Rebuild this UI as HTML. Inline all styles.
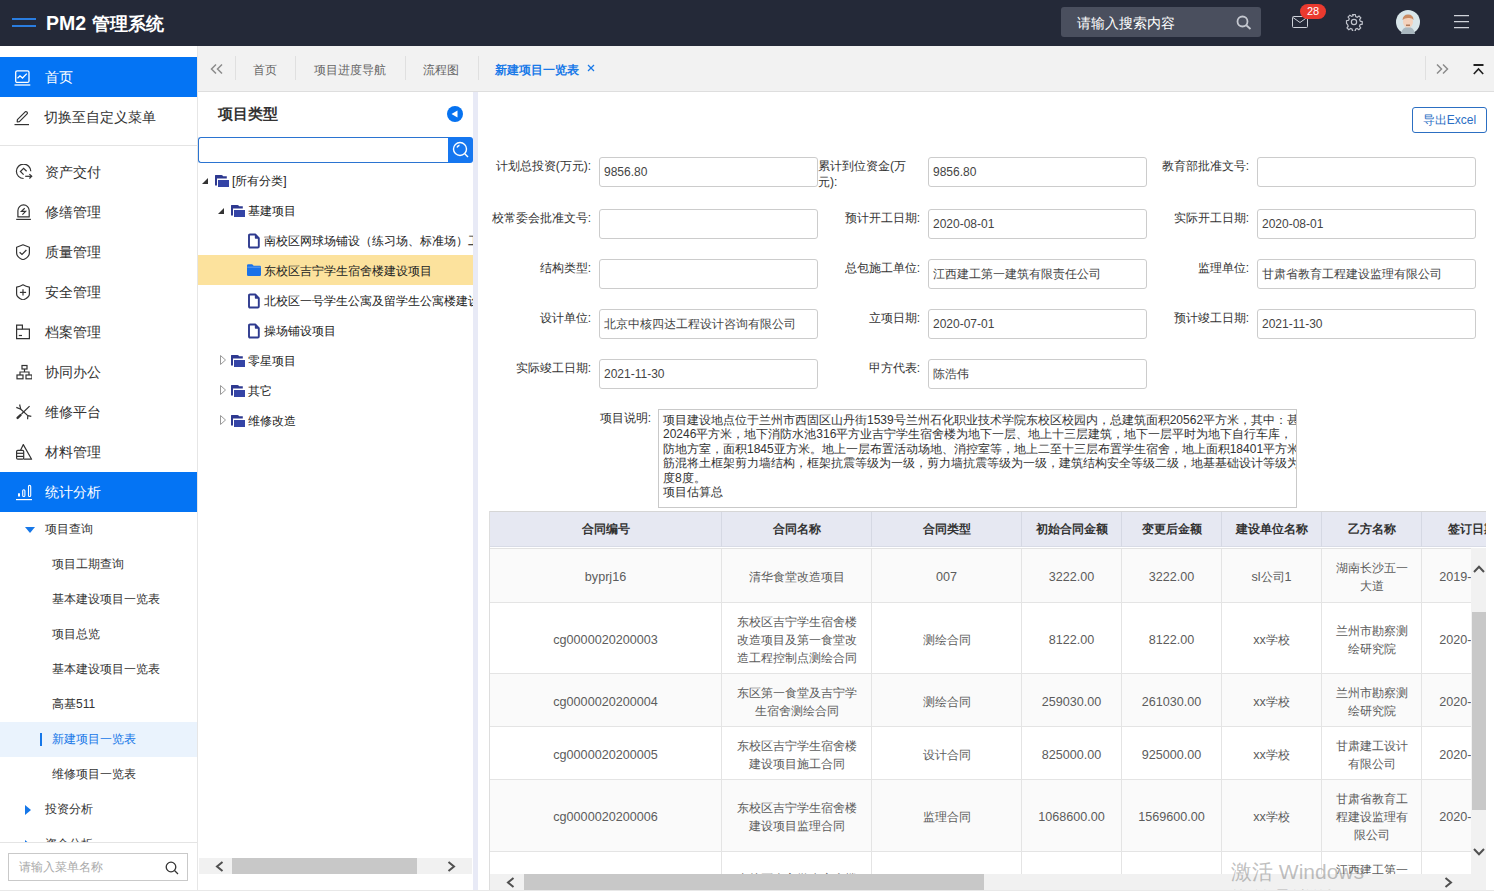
<!DOCTYPE html>
<html><head><meta charset="utf-8">
<style>
*{box-sizing:border-box;margin:0;padding:0}
html,body{width:1494px;height:891px;overflow:hidden;background:#fff;font-family:"Liberation Sans",sans-serif;color:#333}
.abs{position:absolute}
#hdr{left:0;top:0;width:1494px;height:46px;background:#242938}
#side{left:0;top:46px;width:198px;height:845px;background:#fff;border-right:1px solid #e6e6e6;overflow:hidden;z-index:5}
.mi{position:absolute;left:0;width:197px;height:40px;font-size:14px;color:#333;line-height:40px}
.mi .ic{position:absolute;left:14px;top:12px;width:16px;height:16px}
.mi .tx{position:absolute;left:45px;top:0}
.sub{position:absolute;left:52px;font-size:13px;color:#333;line-height:35px;height:35px}
#tabs{left:197px;top:46px;width:1297px;height:46px;background:#f2f2f2;border-bottom:1px solid #dedede;z-index:4}
.tab{position:absolute;top:0;height:45px;line-height:45px;font-size:13px;color:#666}
.tsep{position:absolute;top:15px;width:1px;height:24px;background:#e0e0e0}
#tree{left:197px;top:91px;width:276px;height:800px;background:#fff}
.tn{position:absolute;height:30px;line-height:30px;font-size:13px;color:#333;white-space:nowrap}
#main{left:478px;top:91px;width:1016px;height:800px;background:#fff}
.lbl{position:absolute;font-size:12px;color:#333;text-align:right;line-height:15px;white-space:nowrap}
.inp{position:absolute;height:30px;border:1px solid #ccc;border-radius:3px;font-size:12px;line-height:28px;padding-left:4px;color:#444;background:#fff}
table{border-collapse:collapse}
</style></head>
<body>
<!-- header -->
<div id="hdr" class="abs">
  <div class="abs" style="left:12px;top:18px;width:24px;height:2px;background:#2a7de0"></div>
  <div class="abs" style="left:12px;top:25px;width:24px;height:2px;background:#2a7de0"></div>
  <div class="abs" style="left:46px;top:10px;font-size:19.5px;font-weight:bold;color:#fff;line-height:26px;white-space:nowrap">PM2 <span style="font-size:18px">管理系统</span></div>
  <div class="abs" style="left:1061px;top:7px;width:200px;height:30px;background:#4a4f5e;border-radius:3px"></div>
  <div class="abs" style="left:1077px;top:14px;font-size:14px;color:#fff;line-height:18px">请输入搜索内容</div>

<svg class="abs" style="left:1236px;top:15px" width="16" height="15" viewBox="0 0 16 15" fill="none" stroke="#c5c8d0" stroke-width="1.8"><circle cx="6.5" cy="6.5" r="5"/><line x1="10.3" y1="10.3" x2="14.5" y2="14"/></svg>
<svg class="abs" style="left:1291px;top:15px" width="18" height="14" viewBox="0 0 18 14" fill="none" stroke="#cdd0d8" stroke-width="1"><rect x="1.5" y="1.5" width="15" height="11" rx="1"/><polyline points="2,2.5 9,7.5 16,2.5"/></svg>
<div class="abs" style="left:1300px;top:4px;width:26px;height:15px;background:#ea3a2f;border-radius:8px;color:#fff;font-size:11px;line-height:15px;text-align:center">28</div>
<svg class="abs" style="left:1345px;top:13px" width="18" height="18" viewBox="0 0 24 24" fill="none" stroke="#c0c3cc" stroke-width="1.6"><path d="M10.3 2h3.4l.6 2.8 2 .9 2.4-1.6 2.4 2.4-1.6 2.4.9 2 2.6.6v3.4l-2.8.6-.9 2 1.6 2.4-2.4 2.4-2.4-1.6-2 .9-.6 2.8h-3.4l-.6-2.8-2-.9-2.4 1.6-2.4-2.4 1.6-2.4-.9-2L2 13.7v-3.4l2.8-.6.9-2-1.6-2.4 2.4-2.4 2.4 1.6 2-.9z"/><circle cx="12" cy="12" r="3.5"/></svg>
<svg class="abs" style="left:1396px;top:10px" width="24" height="24" viewBox="0 0 24 24"><circle cx="12" cy="12" r="12" fill="#d9e6ea"/><path d="M5 24 Q6 17 12 17 Q18 17 19 24 Z" fill="#a9b7bf"/><ellipse cx="12" cy="12" rx="5" ry="5.5" fill="#f3d2bd"/><path d="M6.5 10 Q7 4.5 12 4.5 Q17.5 4.5 17.5 10 Q16 7.5 12 8 Q8.5 8 6.5 10Z" fill="#c98b63"/><rect x="10" y="14.5" width="4" height="1.5" fill="#b07a5a"/></svg>
<div class="abs" style="left:1454px;top:15px;width:15px;height:1px;background:#d0d3da;box-shadow:0 0.5px 0 rgba(208,211,218,0.5)"></div>
<div class="abs" style="left:1454px;top:21px;width:15px;height:1px;background:#d0d3da;box-shadow:0 0.5px 0 rgba(208,211,218,0.5)"></div>
<div class="abs" style="left:1454px;top:27px;width:15px;height:1px;background:#d0d3da;box-shadow:0 0.5px 0 rgba(208,211,218,0.5)"></div>
</div>
<!-- sidebar -->
<div id="side" class="abs">
<div class="abs" style="left:0;top:11px;width:197px;height:40px;background:#0474f4"></div>
<svg class="abs" style="left:14px;top:24px" width="17" height="16" viewBox="0 0 17 16" fill="none" stroke="#fff" stroke-width="1.3"><rect x="1.7" y="0.8" width="13.3" height="11.6" rx="1.5"/><polyline points="3.5,8.3 6,5.8 8.5,8 12.8,3.6"/><line x1="0.5" y1="15" x2="16.3" y2="15"/></svg>
<div class="abs" style="left:45px;top:23px;font-size:14px;line-height:16px;color:#fff">首页</div>
<svg class="abs" style="left:14px;top:64px" width="16" height="16" viewBox="0 0 16 16" fill="none" stroke="#333" stroke-width="1.2" stroke-linejoin="round"><path d="M3.2 11.8 L3.4 9.6 L11.2 1.8 Q12 1.2 12.8 1.9 L13.2 2.4 Q13.8 3.2 13.1 3.9 L5.4 11.6 Z"/><line x1="0.5" y1="14.6" x2="15" y2="14.6"/></svg>
<div class="abs" style="left:44px;top:63px;font-size:14px;line-height:16px;color:#333">切换至自定义菜单</div>
<div class="abs" style="left:0;top:99px;width:197px;height:1px;background:#e4e4e4"></div>
<svg class="abs" style="left:15px;top:118px" width="18" height="17" viewBox="0 0 18 17" fill="none" stroke="#333" stroke-width="1.2"><path d="M15.8 7.3 A7.2 7.2 0 1 0 8.6 14.5"/><polyline points="11.6,7.3 8.6,4.4 5.4,7.5 8.6,10.6"/><line x1="10.2" y1="12.3" x2="16.6" y2="12.3"/><polyline points="14.4,10.1 16.7,12.3 14.4,14.5"/></svg>
<div class="abs" style="left:45px;top:118px;font-size:14px;line-height:16px;color:#333">资产交付</div>
<svg class="abs" style="left:15px;top:158px" width="17" height="17" viewBox="0 0 17 17" fill="none" stroke="#333" stroke-width="1.2"><path d="M2.9 12.9 V6.6 A5.65 5.65 0 0 1 14.2 6.6 V12.9 Z" stroke-linejoin="round"/><line x1="1.2" y1="15.4" x2="15.9" y2="15.4"/><polyline points="9.7,4.2 6.4,7.4 10.6,7.4 7.4,10.6"/></svg>
<div class="abs" style="left:45px;top:158px;font-size:14px;line-height:16px;color:#333">修缮管理</div>
<svg class="abs" style="left:15px;top:198px" width="16" height="16" viewBox="0 0 16 16" fill="none" stroke="#333" stroke-width="1.2"><path d="M8 0.8 L14.4 3.2 V8.8 Q14.4 13.2 8 15.8 Q1.6 13.2 1.6 8.8 V3.2 Z" stroke-linejoin="round"/><polyline points="4.6,8.2 7,10.4 11.4,6"/></svg>
<div class="abs" style="left:45px;top:198px;font-size:14px;line-height:16px;color:#333">质量管理</div>
<svg class="abs" style="left:15px;top:238px" width="16" height="16" viewBox="0 0 16 16" fill="none" stroke="#333" stroke-width="1.2"><path d="M8 0.8 Q11 2.6 14.4 3.2 V10 Q14.4 13.4 8 16 Q1.6 13.4 1.6 10 V3.2 Q5 2.6 8 0.8 Z" stroke-linejoin="round"/><line x1="8" y1="5.3" x2="8" y2="11.5"/><line x1="4.9" y1="8.4" x2="11.1" y2="8.4"/></svg>
<div class="abs" style="left:45px;top:238px;font-size:14px;line-height:16px;color:#333">安全管理</div>
<svg class="abs" style="left:15px;top:278px" width="16" height="16" viewBox="0 0 16 16" fill="none" stroke="#333" stroke-width="1.2"><path d="M1.6 14.6 V1.2 H7.4 V5.2 H14.4 V14.6 Z"/><line x1="7.4" y1="5.2" x2="1.6" y2="5.2"/><line x1="3.8" y1="11.5" x2="7" y2="11.5"/></svg>
<div class="abs" style="left:45px;top:278px;font-size:14px;line-height:16px;color:#333">档案管理</div>
<svg class="abs" style="left:16px;top:318px" width="16" height="16" viewBox="0 0 16 16" fill="none" stroke="#333" stroke-width="1.2"><rect x="6" y="1.5" width="5" height="3.5"/><line x1="8.5" y1="5" x2="8.5" y2="8"/><polyline points="4,11 4,8 13,8 13,11"/><rect x="1" y="11" width="6" height="3.8"/><rect x="10" y="11" width="6" height="3.8"/></svg>
<div class="abs" style="left:45px;top:318px;font-size:14px;line-height:16px;color:#333">协同办公</div>
<svg class="abs" style="left:15px;top:358px" width="18" height="17" viewBox="0 0 18 17" fill="none" stroke="#333" stroke-width="1.2"><polyline points="1.3,3.4 5.8,5.3 4.6,0.5" stroke-linejoin="round"/><line x1="5.8" y1="5.3" x2="12.8" y2="11.6"/><polyline points="16.3,12.3 12.8,11.6 12.6,15.3" stroke-linejoin="round"/><line x1="14.6" y1="2.1" x2="6.5" y2="10"/><line x1="5.6" y1="11" x2="2.6" y2="13.9" stroke-width="2.4" stroke-linecap="round"/></svg>
<div class="abs" style="left:45px;top:358px;font-size:14px;line-height:16px;color:#333">维修平台</div>
<svg class="abs" style="left:15px;top:398px" width="18" height="17" viewBox="0 0 18 17" fill="none" stroke="#333" stroke-width="1.2"><polyline points="5.6,6.2 8.3,0.6 16.6,15.2 8.7,15.2" stroke-linejoin="round"/><rect x="1.6" y="6.4" width="7.1" height="8.8" rx="1.2"/><line x1="1.6" y1="9.3" x2="8.7" y2="9.3"/><line x1="1.6" y1="12.4" x2="8.7" y2="12.4"/></svg>
<div class="abs" style="left:45px;top:398px;font-size:14px;line-height:16px;color:#333">材料管理</div>
<div class="abs" style="left:0;top:426px;width:197px;height:40px;background:#0474f4"></div>
<svg class="abs" style="left:16px;top:438px" width="17" height="17" viewBox="0 0 17 17" fill="none" stroke="#fff" stroke-width="1.1"><rect x="2" y="9.3" width="2" height="3.2" fill="#fff" stroke="none"/><rect x="6.7" y="5.7" width="2.2" height="6.8" rx="1.1"/><rect x="12.5" y="1.4" width="2.2" height="11.1" rx="1.1"/><line x1="0" y1="15.6" x2="16" y2="15.6" stroke-width="1.2"/></svg>
<div class="abs" style="left:45px;top:438px;font-size:14px;line-height:16px;color:#fff">统计分析</div>
<svg class="abs" style="left:25px;top:481px" width="10" height="6" viewBox="0 0 10 6"><polygon points="0,0 10,0 5,6" fill="#1677e8"/></svg>
<div class="abs" style="left:45px;top:475px;font-size:12px;line-height:16px;color:#333">项目查询</div>
<div class="abs" style="left:52px;top:510px;font-size:12px;line-height:16px;color:#333">项目工期查询</div>
<div class="abs" style="left:52px;top:545px;font-size:12px;line-height:16px;color:#333">基本建设项目一览表</div>
<div class="abs" style="left:52px;top:580px;font-size:12px;line-height:16px;color:#333">项目总览</div>
<div class="abs" style="left:52px;top:615px;font-size:12px;line-height:16px;color:#333">基本建设项目一览表</div>
<div class="abs" style="left:52px;top:650px;font-size:12px;line-height:16px;color:#333">高基511</div>
<div class="abs" style="left:0;top:676px;width:197px;height:35px;background:#eaf3fd"></div><div class="abs" style="left:40px;top:687px;width:2px;height:13px;background:#1677e8"></div><div class="abs" style="left:52px;top:685px;font-size:12px;line-height:16px;color:#1677e8">新建项目一览表</div>
<div class="abs" style="left:52px;top:720px;font-size:12px;line-height:16px;color:#333">维修项目一览表</div>
<svg class="abs" style="left:25px;top:759px" width="6" height="10" viewBox="0 0 6 10"><polygon points="0,0 6,5 0,10" fill="#1677e8"/></svg>
<div class="abs" style="left:45px;top:755px;font-size:12px;line-height:16px;color:#333">投资分析</div>
<svg class="abs" style="left:25px;top:794px" width="6" height="10" viewBox="0 0 6 10"><polygon points="0,0 6,5 0,10" fill="#1677e8"/></svg>
<div class="abs" style="left:45px;top:790px;font-size:12px;line-height:16px;color:#333">资金分析</div>
<div class="abs" style="left:0;top:796px;width:197px;height:49px;background:#fff;border-top:1px solid #e4e4e4"></div>
<div class="abs" style="left:8px;top:807px;width:180px;height:28px;border:1px solid #c9c9c9;background:#fff"></div>
<div class="abs" style="left:19px;top:813px;font-size:12px;line-height:16px;color:#aaa">请输入菜单名称</div>
<svg class="abs" style="left:165px;top:815px" width="14" height="14" viewBox="0 0 14 14" fill="none" stroke="#333" stroke-width="1.3"><circle cx="6" cy="6" r="4.8"/><line x1="9.5" y1="9.5" x2="13" y2="13"/></svg>
</div>
<!-- tabs -->
<div id="tabs" class="abs">
<svg class="abs" style="left:13px;top:18px" width="13" height="10" viewBox="0 0 13 10" fill="none" stroke="#8c8c8c" stroke-width="1.5"><polyline points="6,0.5 1.5,5 6,9.5"/><polyline points="12,0.5 7.5,5 12,9.5"/></svg>
<div class="tsep" style="left:38px;top:10px"></div>
<div class="tab" style="left:56px;font-size:12px;line-height:48px">首页</div>
<div class="tsep" style="left:98px;top:10px"></div>
<div class="tab" style="left:117px;font-size:12px;line-height:48px">项目进度导航</div>
<div class="tsep" style="left:208px;top:10px"></div>
<div class="tab" style="left:226px;font-size:12px;line-height:48px">流程图</div>
<div class="tsep" style="left:281px;top:10px"></div>
<div class="tab" style="left:298px;font-size:12px;line-height:48px;color:#1a7ae8;font-weight:bold">新建项目一览表</div>
<svg class="abs" style="left:390px;top:18px" width="8" height="8" viewBox="0 0 8 8" stroke="#1a7ae8" stroke-width="1.2"><line x1="1" y1="1" x2="7" y2="7"/><line x1="7" y1="1" x2="1" y2="7"/></svg>
<div class="tsep" style="left:1228px;top:10px"></div>
<svg class="abs" style="left:1239px;top:18px" width="13" height="10" viewBox="0 0 13 10" fill="none" stroke="#8c8c8c" stroke-width="1.5"><polyline points="1,0.5 5.5,5 1,9.5"/><polyline points="7,0.5 11.5,5 7,9.5"/></svg>
<svg class="abs" style="left:1276px;top:17px" width="11" height="12" viewBox="0 0 11 12" fill="none" stroke="#222" stroke-width="1.6"><line x1="0.5" y1="2" x2="10.5" y2="2" stroke-width="2"/><polyline points="0.8,11 5.5,6 10.2,11"/></svg>
</div>
<!-- tree -->
<div id="tree" class="abs" style="overflow:hidden">
<div class="abs" style="left:21px;top:14px;font-size:15px;font-weight:bold;color:#333;line-height:18px">项目类型</div>
<svg class="abs" style="left:250px;top:15px" width="16" height="16" viewBox="0 0 16 16"><circle cx="8" cy="8" r="8" fill="#0672f0"/><polygon points="4.5,8 10.5,4.5 10.5,11.5" fill="#fff"/></svg>
<div class="abs" style="left:1px;top:46px;width:252px;height:26px;border:1px solid #2b74d1;border-right:none;border-radius:3px 0 0 3px;background:#fff"></div>
<div class="abs" style="left:251px;top:46px;width:25px;height:26px;background:#1677f0;border-radius:0 3px 3px 0"></div>
<svg class="abs" style="left:254px;top:49px" width="20" height="20" viewBox="0 0 20 20" fill="none" stroke="#fff" stroke-width="1.4"><circle cx="9" cy="9" r="6.5"/><path d="M6 7.5 A3.5 3.5 0 0 1 8.5 5.2"/><line x1="13.8" y1="13.8" x2="17" y2="17"/></svg>
<div class="abs" style="left:1px;top:164px;width:275px;height:30px;background:#fce29d"></div>
<svg class="abs" style="left:5px;top:87px" width="6" height="6" viewBox="0 0 6 6"><polygon points="6,0 6,6 0,6" fill="#333"/></svg><svg class="abs" style="left:18px;top:83px" width="15" height="14" viewBox="0 0 15 14"><path d="M0.4 1 H6.5 Q7.2 1 7.6 1.6 L8.2 2.3 H11.8 V4.6 H2 V11.6 H0 V1.4 Q0 1 0.4 1 Z" fill="#2e3990"/><rect x="3" y="6" width="11" height="7" fill="#3444a6"/></svg><div class="abs" style="left:35px;top:82px;font-size:12px;line-height:16px;color:#222;white-space:nowrap">[所有分类]</div><svg class="abs" style="left:21px;top:117px" width="6" height="6" viewBox="0 0 6 6"><polygon points="6,0 6,6 0,6" fill="#333"/></svg><svg class="abs" style="left:34px;top:113px" width="15" height="14" viewBox="0 0 15 14"><path d="M0.4 1 H6.5 Q7.2 1 7.6 1.6 L8.2 2.3 H11.8 V4.6 H2 V11.6 H0 V1.4 Q0 1 0.4 1 Z" fill="#2e3990"/><rect x="3" y="6" width="11" height="7" fill="#3444a6"/></svg><div class="abs" style="left:51px;top:112px;font-size:12px;line-height:16px;color:#222;white-space:nowrap">基建项目</div><svg class="abs" style="left:51px;top:142px" width="12" height="16" viewBox="0 0 12 16" fill="none" stroke="#2f3b8f" stroke-width="1.9" stroke-linejoin="round"><path d="M2 1.5 H7.2 L10.8 5.2 V13.5 Q10.8 14.5 9.8 14.5 H2 Q1 14.5 1 13.5 V2.5 Q1 1.5 2 1.5 Z"/><path d="M7.5 2 V5 H10.5" stroke-width="1.3" fill="#2f3b8f"/></svg><div class="abs" style="left:67px;top:142px;font-size:12px;line-height:16px;color:#222;white-space:nowrap">南校区网球场铺设（练习场、标准场）工程</div><svg class="abs" style="left:50px;top:173px" width="14" height="12" viewBox="0 0 14 12"><path d="M1.2 0.3 H4.8 Q5.6 0.3 6 1 L6.6 1.8 H12.8 Q14 1.8 14 3 V10.8 Q14 12 12.8 12 H1.2 Q0 12 0 10.8 V1.5 Q0 0.3 1.2 0.3 Z" fill="#1a72e8"/><path d="M0.3 3.2 H13.7" stroke="#fff" stroke-width="0.6" opacity="0.5"/></svg><div class="abs" style="left:67px;top:172px;font-size:12px;line-height:16px;color:#222;white-space:nowrap">东校区吉宁学生宿舍楼建设项目</div><svg class="abs" style="left:51px;top:202px" width="12" height="16" viewBox="0 0 12 16" fill="none" stroke="#2f3b8f" stroke-width="1.9" stroke-linejoin="round"><path d="M2 1.5 H7.2 L10.8 5.2 V13.5 Q10.8 14.5 9.8 14.5 H2 Q1 14.5 1 13.5 V2.5 Q1 1.5 2 1.5 Z"/><path d="M7.5 2 V5 H10.5" stroke-width="1.3" fill="#2f3b8f"/></svg><div class="abs" style="left:67px;top:202px;font-size:12px;line-height:16px;color:#222;white-space:nowrap">北校区一号学生公寓及留学生公寓楼建设项目</div><svg class="abs" style="left:51px;top:232px" width="12" height="16" viewBox="0 0 12 16" fill="none" stroke="#2f3b8f" stroke-width="1.9" stroke-linejoin="round"><path d="M2 1.5 H7.2 L10.8 5.2 V13.5 Q10.8 14.5 9.8 14.5 H2 Q1 14.5 1 13.5 V2.5 Q1 1.5 2 1.5 Z"/><path d="M7.5 2 V5 H10.5" stroke-width="1.3" fill="#2f3b8f"/></svg><div class="abs" style="left:67px;top:232px;font-size:12px;line-height:16px;color:#222;white-space:nowrap">操场铺设项目</div><svg class="abs" style="left:23px;top:264px" width="6" height="10" viewBox="0 0 6 10" fill="none" stroke="#999" stroke-width="1"><polygon points="0.5,0.5 5.5,5 0.5,9.5"/></svg><svg class="abs" style="left:34px;top:263px" width="15" height="14" viewBox="0 0 15 14"><path d="M0.4 1 H6.5 Q7.2 1 7.6 1.6 L8.2 2.3 H11.8 V4.6 H2 V11.6 H0 V1.4 Q0 1 0.4 1 Z" fill="#2e3990"/><rect x="3" y="6" width="11" height="7" fill="#3444a6"/></svg><div class="abs" style="left:51px;top:262px;font-size:12px;line-height:16px;color:#222;white-space:nowrap">零星项目</div><svg class="abs" style="left:23px;top:294px" width="6" height="10" viewBox="0 0 6 10" fill="none" stroke="#999" stroke-width="1"><polygon points="0.5,0.5 5.5,5 0.5,9.5"/></svg><svg class="abs" style="left:34px;top:293px" width="15" height="14" viewBox="0 0 15 14"><path d="M0.4 1 H6.5 Q7.2 1 7.6 1.6 L8.2 2.3 H11.8 V4.6 H2 V11.6 H0 V1.4 Q0 1 0.4 1 Z" fill="#2e3990"/><rect x="3" y="6" width="11" height="7" fill="#3444a6"/></svg><div class="abs" style="left:51px;top:292px;font-size:12px;line-height:16px;color:#222;white-space:nowrap">其它</div><svg class="abs" style="left:23px;top:324px" width="6" height="10" viewBox="0 0 6 10" fill="none" stroke="#999" stroke-width="1"><polygon points="0.5,0.5 5.5,5 0.5,9.5"/></svg><svg class="abs" style="left:34px;top:323px" width="15" height="14" viewBox="0 0 15 14"><path d="M0.4 1 H6.5 Q7.2 1 7.6 1.6 L8.2 2.3 H11.8 V4.6 H2 V11.6 H0 V1.4 Q0 1 0.4 1 Z" fill="#2e3990"/><rect x="3" y="6" width="11" height="7" fill="#3444a6"/></svg><div class="abs" style="left:51px;top:322px;font-size:12px;line-height:16px;color:#222;white-space:nowrap">维修改造</div>
<div class="abs" style="left:2px;top:767px;width:273px;height:16px;background:#f1f1f1"></div>
<div class="abs" style="left:35px;top:767px;width:185px;height:16px;background:#c8c8c8"></div>
<svg class="abs" style="left:18px;top:770px" width="9" height="11" viewBox="0 0 9 11" fill="none" stroke="#505050" stroke-width="2"><polyline points="7.5,1 2,5.5 7.5,10"/></svg>
<svg class="abs" style="left:250px;top:770px" width="9" height="11" viewBox="0 0 9 11" fill="none" stroke="#505050" stroke-width="2"><polyline points="1.5,1 7,5.5 1.5,10"/></svg>
</div>
<div class="abs" style="left:473px;top:91px;width:5px;height:800px;background:#e8eaf6"></div>
<!-- main -->
<div id="main" class="abs" style="overflow:hidden"><div class="abs" style="left:934px;top:16px;width:75px;height:26px;border:1px solid #2c6fc2;border-radius:3px;font-size:12px;line-height:24px;color:#2a6ec4;text-align:center">导出Excel</div><div class="lbl" style="left:11px;top:67px;width:102px;line-height:16px">计划总投资(万元):</div><div class="inp" style="left:121px;top:66px;width:219px">9856.80</div><div class="lbl" style="left:340px;top:67px;width:102px;text-align:left;line-height:16px">累计到位资金(万<br>元):</div><div class="inp" style="left:450px;top:66px;width:219px">9856.80</div><div class="lbl" style="left:669px;top:67px;width:102px;line-height:16px">教育部批准文号:</div><div class="inp" style="left:779px;top:66px;width:219px"></div><div class="lbl" style="left:11px;top:119px;width:102px;line-height:16px">校常委会批准文号:</div><div class="inp" style="left:121px;top:118px;width:219px"></div><div class="lbl" style="left:340px;top:119px;width:102px;line-height:16px">预计开工日期:</div><div class="inp" style="left:450px;top:118px;width:219px">2020-08-01</div><div class="lbl" style="left:669px;top:119px;width:102px;line-height:16px">实际开工日期:</div><div class="inp" style="left:779px;top:118px;width:219px">2020-08-01</div><div class="lbl" style="left:11px;top:169px;width:102px;line-height:16px">结构类型:</div><div class="inp" style="left:121px;top:168px;width:219px"></div><div class="lbl" style="left:340px;top:169px;width:102px;line-height:16px">总包施工单位:</div><div class="inp" style="left:450px;top:168px;width:219px">江西建工第一建筑有限责任公司</div><div class="lbl" style="left:669px;top:169px;width:102px;line-height:16px">监理单位:</div><div class="inp" style="left:779px;top:168px;width:219px">甘肃省教育工程建设监理有限公司</div><div class="lbl" style="left:11px;top:219px;width:102px;line-height:16px">设计单位:</div><div class="inp" style="left:121px;top:218px;width:219px">北京中核四达工程设计咨询有限公司</div><div class="lbl" style="left:340px;top:219px;width:102px;line-height:16px">立项日期:</div><div class="inp" style="left:450px;top:218px;width:219px">2020-07-01</div><div class="lbl" style="left:669px;top:219px;width:102px;line-height:16px">预计竣工日期:</div><div class="inp" style="left:779px;top:218px;width:219px">2021-11-30</div><div class="lbl" style="left:11px;top:269px;width:102px;line-height:16px">实际竣工日期:</div><div class="inp" style="left:121px;top:268px;width:219px">2021-11-30</div><div class="lbl" style="left:340px;top:269px;width:102px;line-height:16px">甲方代表:</div><div class="inp" style="left:450px;top:268px;width:219px">陈浩伟</div><div class="lbl" style="left:11px;top:319px;width:162px;line-height:16px">项目说明:</div><div class="abs" style="left:180px;top:318px;width:639px;height:99px;border:1px solid #c9c9c9;background:#fff;overflow:hidden"><div style="position:absolute;left:4px;top:3px;width:700px;font-size:12px;line-height:14.4px;color:#333;white-space:nowrap">项目建设地点位于兰州市西固区山丹街1539号兰州石化职业技术学院东校区校园内，总建筑面积20562平方米，其中：甚<br>20246平方米，地下消防水池316平方业吉宁学生宿舍楼为地下一层、地上十三层建筑，地下一层平时为地下自行车库，<br>防地方室，面积1845亚方米。地上一层布置活动场地、消控室等，地上二至十三层布置学生宿舍，地上面积18401平方米<br>筋混将土框架剪力墙结构，框架抗震等级为一级，剪力墙抗震等级为一级，建筑结构安全等级二级，地基基础设计等级为<br>度8度。<br>项目估算总</div></div><div id="tbl" class="abs" style="left:11px;top:420px;width:997px;height:380px;overflow:hidden;border-left:1px solid #ddd"><div class="abs" style="left:0;top:0;width:1100px;height:36px;background:#e6e8f2;border-bottom:1px solid #d8dbe6"></div><div class="abs" style="left:0px;top:0;width:232px;height:36px;line-height:37px;text-align:center;font-size:12px;font-weight:bold;color:#333;border-right:1px solid #d5d8e3">合同编号</div><div class="abs" style="left:232px;top:0;width:150px;height:36px;line-height:37px;text-align:center;font-size:12px;font-weight:bold;color:#333;border-right:1px solid #d5d8e3">合同名称</div><div class="abs" style="left:382px;top:0;width:150px;height:36px;line-height:37px;text-align:center;font-size:12px;font-weight:bold;color:#333;border-right:1px solid #d5d8e3">合同类型</div><div class="abs" style="left:532px;top:0;width:100px;height:36px;line-height:37px;text-align:center;font-size:12px;font-weight:bold;color:#333;border-right:1px solid #d5d8e3">初始合同金额</div><div class="abs" style="left:632px;top:0;width:100px;height:36px;line-height:37px;text-align:center;font-size:12px;font-weight:bold;color:#333;border-right:1px solid #d5d8e3">变更后金额</div><div class="abs" style="left:732px;top:0;width:100px;height:36px;line-height:37px;text-align:center;font-size:12px;font-weight:bold;color:#333;border-right:1px solid #d5d8e3">建设单位名称</div><div class="abs" style="left:832px;top:0;width:100px;height:36px;line-height:37px;text-align:center;font-size:12px;font-weight:bold;color:#333;border-right:1px solid #d5d8e3">乙方名称</div><div class="abs" style="left:932px;top:0;width:100px;height:36px;line-height:37px;text-align:center;font-size:12px;font-weight:bold;color:#333;border-right:1px solid #d5d8e3">签订日期</div><div class="abs" style="left:0;top:36px;width:1100px;height:2px;background:#fff;border-bottom:1px solid #e2e2e2"></div><div class="abs" style="left:0;top:0;width:1100px;height:1px;background:#d6d6d6"></div><div class="abs" style="left:0;top:38px;width:1100px;height:54px;background:#fafafa;border-bottom:1px solid #e4e4e4"></div><div class="abs" style="left:0px;top:38px;width:232px;height:54px;display:flex;align-items:center;justify-content:center;text-align:center;font-size:12px;line-height:18px;color:#5c5c5c;padding:2px 8px 0 8px;white-space:nowrap;border-right:1px solid #e4e4e4"><div><span style="font-size:12.6px">byprj16</span></div></div><div class="abs" style="left:232px;top:38px;width:150px;height:54px;display:flex;align-items:center;justify-content:center;text-align:center;font-size:12px;line-height:18px;color:#5c5c5c;padding:2px 8px 0 8px;white-space:nowrap;border-right:1px solid #e4e4e4"><div>清华食堂改造项目</div></div><div class="abs" style="left:382px;top:38px;width:150px;height:54px;display:flex;align-items:center;justify-content:center;text-align:center;font-size:12px;line-height:18px;color:#5c5c5c;padding:2px 8px 0 8px;white-space:nowrap;border-right:1px solid #e4e4e4"><div><span style="font-size:12.6px">007</span></div></div><div class="abs" style="left:532px;top:38px;width:100px;height:54px;display:flex;align-items:center;justify-content:center;text-align:center;font-size:12px;line-height:18px;color:#5c5c5c;padding:2px 8px 0 8px;white-space:nowrap;border-right:1px solid #e4e4e4"><div><span style="font-size:12.6px">3222.00</span></div></div><div class="abs" style="left:632px;top:38px;width:100px;height:54px;display:flex;align-items:center;justify-content:center;text-align:center;font-size:12px;line-height:18px;color:#5c5c5c;padding:2px 8px 0 8px;white-space:nowrap;border-right:1px solid #e4e4e4"><div><span style="font-size:12.6px">3222.00</span></div></div><div class="abs" style="left:732px;top:38px;width:100px;height:54px;display:flex;align-items:center;justify-content:center;text-align:center;font-size:12px;line-height:18px;color:#5c5c5c;padding:2px 8px 0 8px;white-space:nowrap;border-right:1px solid #e4e4e4"><div><span style="font-size:12.6px">sl</span>公司<span style="font-size:12.6px">1</span></div></div><div class="abs" style="left:832px;top:38px;width:100px;height:54px;display:flex;align-items:center;justify-content:center;text-align:center;font-size:12px;line-height:18px;color:#5c5c5c;padding:2px 8px 0 8px;white-space:nowrap;border-right:1px solid #e4e4e4"><div>湖南长沙五一<br>大道</div></div><div class="abs" style="left:932px;top:38px;width:100px;height:54px;display:flex;align-items:center;justify-content:center;text-align:center;font-size:12px;line-height:18px;color:#5c5c5c;padding:2px 8px 0 8px;white-space:nowrap;border-right:1px solid #e4e4e4"><div><span style="font-size:12.6px">2019-01-01</span></div></div><div class="abs" style="left:0;top:92px;width:1100px;height:71px;background:#fff;border-bottom:1px solid #e4e4e4"></div><div class="abs" style="left:0px;top:92px;width:232px;height:71px;display:flex;align-items:center;justify-content:center;text-align:center;font-size:12px;line-height:18px;color:#5c5c5c;padding:2px 8px 0 8px;white-space:nowrap;border-right:1px solid #e4e4e4"><div><span style="font-size:12.6px">cg0000020200003</span></div></div><div class="abs" style="left:232px;top:92px;width:150px;height:71px;display:flex;align-items:center;justify-content:center;text-align:center;font-size:12px;line-height:18px;color:#5c5c5c;padding:2px 8px 0 8px;white-space:nowrap;border-right:1px solid #e4e4e4"><div>东校区吉宁学生宿舍楼<br>改造项目及第一食堂改<br>造工程控制点测绘合同</div></div><div class="abs" style="left:382px;top:92px;width:150px;height:71px;display:flex;align-items:center;justify-content:center;text-align:center;font-size:12px;line-height:18px;color:#5c5c5c;padding:2px 8px 0 8px;white-space:nowrap;border-right:1px solid #e4e4e4"><div>测绘合同</div></div><div class="abs" style="left:532px;top:92px;width:100px;height:71px;display:flex;align-items:center;justify-content:center;text-align:center;font-size:12px;line-height:18px;color:#5c5c5c;padding:2px 8px 0 8px;white-space:nowrap;border-right:1px solid #e4e4e4"><div><span style="font-size:12.6px">8122.00</span></div></div><div class="abs" style="left:632px;top:92px;width:100px;height:71px;display:flex;align-items:center;justify-content:center;text-align:center;font-size:12px;line-height:18px;color:#5c5c5c;padding:2px 8px 0 8px;white-space:nowrap;border-right:1px solid #e4e4e4"><div><span style="font-size:12.6px">8122.00</span></div></div><div class="abs" style="left:732px;top:92px;width:100px;height:71px;display:flex;align-items:center;justify-content:center;text-align:center;font-size:12px;line-height:18px;color:#5c5c5c;padding:2px 8px 0 8px;white-space:nowrap;border-right:1px solid #e4e4e4"><div><span style="font-size:12.6px">xx</span>学校</div></div><div class="abs" style="left:832px;top:92px;width:100px;height:71px;display:flex;align-items:center;justify-content:center;text-align:center;font-size:12px;line-height:18px;color:#5c5c5c;padding:2px 8px 0 8px;white-space:nowrap;border-right:1px solid #e4e4e4"><div>兰州市勘察测<br>绘研究院</div></div><div class="abs" style="left:932px;top:92px;width:100px;height:71px;display:flex;align-items:center;justify-content:center;text-align:center;font-size:12px;line-height:18px;color:#5c5c5c;padding:2px 8px 0 8px;white-space:nowrap;border-right:1px solid #e4e4e4"><div><span style="font-size:12.6px">2020-01-01</span></div></div><div class="abs" style="left:0;top:163px;width:1100px;height:53px;background:#fafafa;border-bottom:1px solid #e4e4e4"></div><div class="abs" style="left:0px;top:163px;width:232px;height:53px;display:flex;align-items:center;justify-content:center;text-align:center;font-size:12px;line-height:18px;color:#5c5c5c;padding:2px 8px 0 8px;white-space:nowrap;border-right:1px solid #e4e4e4"><div><span style="font-size:12.6px">cg0000020200004</span></div></div><div class="abs" style="left:232px;top:163px;width:150px;height:53px;display:flex;align-items:center;justify-content:center;text-align:center;font-size:12px;line-height:18px;color:#5c5c5c;padding:2px 8px 0 8px;white-space:nowrap;border-right:1px solid #e4e4e4"><div>东区第一食堂及吉宁学<br>生宿舍测绘合同</div></div><div class="abs" style="left:382px;top:163px;width:150px;height:53px;display:flex;align-items:center;justify-content:center;text-align:center;font-size:12px;line-height:18px;color:#5c5c5c;padding:2px 8px 0 8px;white-space:nowrap;border-right:1px solid #e4e4e4"><div>测绘合同</div></div><div class="abs" style="left:532px;top:163px;width:100px;height:53px;display:flex;align-items:center;justify-content:center;text-align:center;font-size:12px;line-height:18px;color:#5c5c5c;padding:2px 8px 0 8px;white-space:nowrap;border-right:1px solid #e4e4e4"><div><span style="font-size:12.6px">259030.00</span></div></div><div class="abs" style="left:632px;top:163px;width:100px;height:53px;display:flex;align-items:center;justify-content:center;text-align:center;font-size:12px;line-height:18px;color:#5c5c5c;padding:2px 8px 0 8px;white-space:nowrap;border-right:1px solid #e4e4e4"><div><span style="font-size:12.6px">261030.00</span></div></div><div class="abs" style="left:732px;top:163px;width:100px;height:53px;display:flex;align-items:center;justify-content:center;text-align:center;font-size:12px;line-height:18px;color:#5c5c5c;padding:2px 8px 0 8px;white-space:nowrap;border-right:1px solid #e4e4e4"><div><span style="font-size:12.6px">xx</span>学校</div></div><div class="abs" style="left:832px;top:163px;width:100px;height:53px;display:flex;align-items:center;justify-content:center;text-align:center;font-size:12px;line-height:18px;color:#5c5c5c;padding:2px 8px 0 8px;white-space:nowrap;border-right:1px solid #e4e4e4"><div>兰州市勘察测<br>绘研究院</div></div><div class="abs" style="left:932px;top:163px;width:100px;height:53px;display:flex;align-items:center;justify-content:center;text-align:center;font-size:12px;line-height:18px;color:#5c5c5c;padding:2px 8px 0 8px;white-space:nowrap;border-right:1px solid #e4e4e4"><div><span style="font-size:12.6px">2020-01-01</span></div></div><div class="abs" style="left:0;top:216px;width:1100px;height:53px;background:#fff;border-bottom:1px solid #e4e4e4"></div><div class="abs" style="left:0px;top:216px;width:232px;height:53px;display:flex;align-items:center;justify-content:center;text-align:center;font-size:12px;line-height:18px;color:#5c5c5c;padding:2px 8px 0 8px;white-space:nowrap;border-right:1px solid #e4e4e4"><div><span style="font-size:12.6px">cg0000020200005</span></div></div><div class="abs" style="left:232px;top:216px;width:150px;height:53px;display:flex;align-items:center;justify-content:center;text-align:center;font-size:12px;line-height:18px;color:#5c5c5c;padding:2px 8px 0 8px;white-space:nowrap;border-right:1px solid #e4e4e4"><div>东校区吉宁学生宿舍楼<br>建设项目施工合同</div></div><div class="abs" style="left:382px;top:216px;width:150px;height:53px;display:flex;align-items:center;justify-content:center;text-align:center;font-size:12px;line-height:18px;color:#5c5c5c;padding:2px 8px 0 8px;white-space:nowrap;border-right:1px solid #e4e4e4"><div>设计合同</div></div><div class="abs" style="left:532px;top:216px;width:100px;height:53px;display:flex;align-items:center;justify-content:center;text-align:center;font-size:12px;line-height:18px;color:#5c5c5c;padding:2px 8px 0 8px;white-space:nowrap;border-right:1px solid #e4e4e4"><div><span style="font-size:12.6px">825000.00</span></div></div><div class="abs" style="left:632px;top:216px;width:100px;height:53px;display:flex;align-items:center;justify-content:center;text-align:center;font-size:12px;line-height:18px;color:#5c5c5c;padding:2px 8px 0 8px;white-space:nowrap;border-right:1px solid #e4e4e4"><div><span style="font-size:12.6px">925000.00</span></div></div><div class="abs" style="left:732px;top:216px;width:100px;height:53px;display:flex;align-items:center;justify-content:center;text-align:center;font-size:12px;line-height:18px;color:#5c5c5c;padding:2px 8px 0 8px;white-space:nowrap;border-right:1px solid #e4e4e4"><div><span style="font-size:12.6px">xx</span>学校</div></div><div class="abs" style="left:832px;top:216px;width:100px;height:53px;display:flex;align-items:center;justify-content:center;text-align:center;font-size:12px;line-height:18px;color:#5c5c5c;padding:2px 8px 0 8px;white-space:nowrap;border-right:1px solid #e4e4e4"><div>甘肃建工设计<br>有限公司</div></div><div class="abs" style="left:932px;top:216px;width:100px;height:53px;display:flex;align-items:center;justify-content:center;text-align:center;font-size:12px;line-height:18px;color:#5c5c5c;padding:2px 8px 0 8px;white-space:nowrap;border-right:1px solid #e4e4e4"><div><span style="font-size:12.6px">2020-01-01</span></div></div><div class="abs" style="left:0;top:269px;width:1100px;height:72px;background:#fafafa;border-bottom:1px solid #e4e4e4"></div><div class="abs" style="left:0px;top:269px;width:232px;height:72px;display:flex;align-items:center;justify-content:center;text-align:center;font-size:12px;line-height:18px;color:#5c5c5c;padding:2px 8px 0 8px;white-space:nowrap;border-right:1px solid #e4e4e4"><div><span style="font-size:12.6px">cg0000020200006</span></div></div><div class="abs" style="left:232px;top:269px;width:150px;height:72px;display:flex;align-items:center;justify-content:center;text-align:center;font-size:12px;line-height:18px;color:#5c5c5c;padding:2px 8px 0 8px;white-space:nowrap;border-right:1px solid #e4e4e4"><div>东校区吉宁学生宿舍楼<br>建设项目监理合同</div></div><div class="abs" style="left:382px;top:269px;width:150px;height:72px;display:flex;align-items:center;justify-content:center;text-align:center;font-size:12px;line-height:18px;color:#5c5c5c;padding:2px 8px 0 8px;white-space:nowrap;border-right:1px solid #e4e4e4"><div>监理合同</div></div><div class="abs" style="left:532px;top:269px;width:100px;height:72px;display:flex;align-items:center;justify-content:center;text-align:center;font-size:12px;line-height:18px;color:#5c5c5c;padding:2px 8px 0 8px;white-space:nowrap;border-right:1px solid #e4e4e4"><div><span style="font-size:12.6px">1068600.00</span></div></div><div class="abs" style="left:632px;top:269px;width:100px;height:72px;display:flex;align-items:center;justify-content:center;text-align:center;font-size:12px;line-height:18px;color:#5c5c5c;padding:2px 8px 0 8px;white-space:nowrap;border-right:1px solid #e4e4e4"><div><span style="font-size:12.6px">1569600.00</span></div></div><div class="abs" style="left:732px;top:269px;width:100px;height:72px;display:flex;align-items:center;justify-content:center;text-align:center;font-size:12px;line-height:18px;color:#5c5c5c;padding:2px 8px 0 8px;white-space:nowrap;border-right:1px solid #e4e4e4"><div><span style="font-size:12.6px">xx</span>学校</div></div><div class="abs" style="left:832px;top:269px;width:100px;height:72px;display:flex;align-items:center;justify-content:center;text-align:center;font-size:12px;line-height:18px;color:#5c5c5c;padding:2px 8px 0 8px;white-space:nowrap;border-right:1px solid #e4e4e4"><div>甘肃省教育工<br>程建设监理有<br>限公司</div></div><div class="abs" style="left:932px;top:269px;width:100px;height:72px;display:flex;align-items:center;justify-content:center;text-align:center;font-size:12px;line-height:18px;color:#5c5c5c;padding:2px 8px 0 8px;white-space:nowrap;border-right:1px solid #e4e4e4"><div><span style="font-size:12.6px">2020-01-01</span></div></div><div class="abs" style="left:0;top:341px;width:1100px;height:70px;background:#fff;border-bottom:1px solid #e4e4e4"></div><div class="abs" style="left:0px;top:341px;width:232px;height:70px;display:flex;align-items:center;justify-content:center;text-align:center;font-size:12px;line-height:18px;color:#5c5c5c;padding:2px 8px 0 8px;white-space:nowrap;border-right:1px solid #e4e4e4"><div></div></div><div class="abs" style="left:232px;top:341px;width:150px;height:70px;display:flex;align-items:center;justify-content:center;text-align:center;font-size:12px;line-height:18px;color:#5c5c5c;padding:2px 8px 0 8px;white-space:nowrap;border-right:1px solid #e4e4e4"><div>东校区吉宁学生宿舍楼<br>建设项目总包合同</div></div><div class="abs" style="left:382px;top:341px;width:150px;height:70px;display:flex;align-items:center;justify-content:center;text-align:center;font-size:12px;line-height:18px;color:#5c5c5c;padding:2px 8px 0 8px;white-space:nowrap;border-right:1px solid #e4e4e4"><div></div></div><div class="abs" style="left:532px;top:341px;width:100px;height:70px;display:flex;align-items:center;justify-content:center;text-align:center;font-size:12px;line-height:18px;color:#5c5c5c;padding:2px 8px 0 8px;white-space:nowrap;border-right:1px solid #e4e4e4"><div></div></div><div class="abs" style="left:632px;top:341px;width:100px;height:70px;display:flex;align-items:center;justify-content:center;text-align:center;font-size:12px;line-height:18px;color:#5c5c5c;padding:2px 8px 0 8px;white-space:nowrap;border-right:1px solid #e4e4e4"><div></div></div><div class="abs" style="left:732px;top:341px;width:100px;height:70px;display:flex;align-items:center;justify-content:center;text-align:center;font-size:12px;line-height:18px;color:#5c5c5c;padding:2px 8px 0 8px;white-space:nowrap;border-right:1px solid #e4e4e4"><div></div></div><div class="abs" style="left:832px;top:341px;width:100px;height:70px;display:flex;align-items:center;justify-content:center;text-align:center;font-size:12px;line-height:18px;color:#5c5c5c;padding:2px 8px 0 8px;white-space:nowrap;border-right:1px solid #e4e4e4"><div>江西建工第一<br>建筑有限责任<br>公司</div></div><div class="abs" style="left:932px;top:341px;width:100px;height:70px;display:flex;align-items:center;justify-content:center;text-align:center;font-size:12px;line-height:18px;color:#5c5c5c;padding:2px 8px 0 8px;white-space:nowrap;border-right:1px solid #e4e4e4"><div></div></div><div class="abs" style="left:981px;top:37px;width:16px;height:343px;background:#f1f1f1"></div><div class="abs" style="left:982px;top:101px;width:14px;height:198px;background:#c8c8c8"></div><svg class="abs" style="left:983px;top:54px" width="12" height="8" viewBox="0 0 12 8" fill="none" stroke="#505050" stroke-width="2"><polyline points="1,7 6,1.8 11,7"/></svg><svg class="abs" style="left:983px;top:337px" width="12" height="8" viewBox="0 0 12 8" fill="none" stroke="#505050" stroke-width="2"><polyline points="1,1 6,6.2 11,1"/></svg><div class="abs" style="left:0;top:363px;width:981px;height:17px;background:#f1f1f1"></div><div class="abs" style="left:34px;top:363px;width:460px;height:16px;background:#c8c8c8"></div><svg class="abs" style="left:16px;top:366px" width="9" height="11" viewBox="0 0 9 11" fill="none" stroke="#505050" stroke-width="2"><polyline points="7.5,1 2,5.5 7.5,10"/></svg><svg class="abs" style="left:954px;top:366px" width="9" height="11" viewBox="0 0 9 11" fill="none" stroke="#505050" stroke-width="2"><polyline points="1.5,1 7,5.5 1.5,10"/></svg></div><!--/tbl--><div class="abs" style="left:753px;top:769px;font-size:21px;line-height:24px;color:rgba(130,130,130,0.5);white-space:nowrap">激活 Windows</div><div class="abs" style="left:754px;top:797px;font-size:13px;line-height:16px;color:rgba(120,120,120,0.5);white-space:nowrap">转到"设置"以激活 Windows。</div></div>
<div class="abs" style="left:1218px;top:46px;width:258px;height:16px;background:linear-gradient(to bottom, rgba(0,0,0,0.0) 0%, rgba(0,0,0,0.06) 40%, rgba(0,0,0,0.05) 60%, rgba(0,0,0,0) 100%);border-radius:6px;filter:blur(2px)"></div>
<div class="abs" style="left:0;top:890px;width:1494px;height:1px;background:#e8e8e8;z-index:10"></div>
</body></html>
